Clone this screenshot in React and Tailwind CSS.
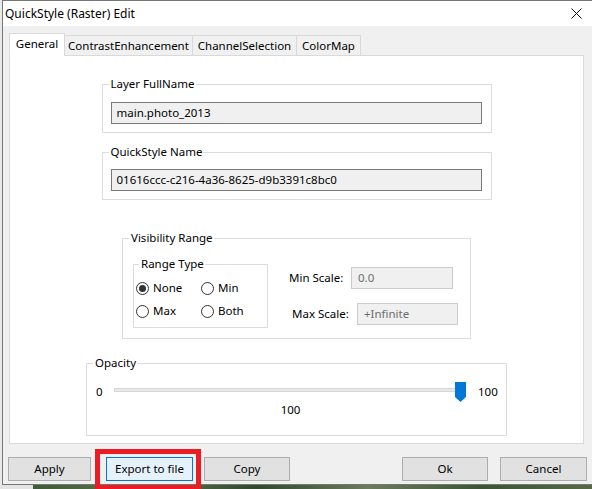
import React from "react";

function GroupBox({ label, className, labelLeft = "left-[6px]", children }) {
  return (
    <div className={"relative border border-[#dcdcdc] " + className}>
      <div className={"absolute top-[-9px] " + labelLeft + " bg-white pl-[2px] pr-[1px] leading-[16px] text-black"}>
        {label}
      </div>
      {children}
    </div>
  );
}

function Radio({ label, checked }) {
  return (
    <div className="flex items-center gap-[4px] h-[16px]">
      <div className="w-[13px] h-[13px] rounded-full border border-[#333] bg-white flex items-center justify-center">
        {checked && <div className="w-[7px] h-[7px] rounded-full bg-[#333]" />}
      </div>
      <span className="leading-[16px]">{label}</span>
    </div>
  );
}

function Btn({ children, className, focused }) {
  return (
    <div
      className={
        "h-[24px] flex items-center justify-center border leading-[16px] text-black " +
        (focused ? "bg-[#e5f1fb] border-[#0078d7] " : "bg-[#e1e1e1] border-[#adadad] ") +
        className
      }
    >
      {children}
    </div>
  );
}

export default function App() {
  const tabs = [
    { name: "General", w: "w-[56px]", sel: true },
    { name: "ContrastEnhancement", w: "w-[129px]" },
    { name: "ChannelSelection", w: "w-[105px]" },
    { name: "ColorMap", w: "w-[65px]" },
  ];
  return (
    <div className="relative w-[592px] h-[489px] overflow-hidden bg-[#e9e9e9] font-['Noto_Sans',sans-serif] text-[11.5px] text-black">
      <div className="h-[485px] ml-[2px] border-l border-t border-b border-[#767676] bg-[#f0f0f0] flex flex-col">
        {/* title bar */}
        <div className="h-[25px] bg-white flex items-center justify-between pl-[2px] pr-[10px] shrink-0">
          <span className="leading-[16px] text-[12px]">QuickStyle (Raster) Edit</span>
          <svg width="11" height="11" viewBox="0 0 11 11">
            <path d="M0.5 0.5 L10.5 10.5 M10.5 0.5 L0.5 10.5" stroke="#111" strokeWidth="1" />
          </svg>
        </div>
        {/* tabs */}
        <div className="mt-[7px] h-[22px] flex items-end pl-[6px] shrink-0">
          {tabs.map((t, i) => (
            <div
              key={t.name}
              className={
                t.w +
                " flex justify-center border-t border-l border-r border-[#d9d9d9] leading-[16px] " +
                (i > 0 ? "-ml-px " : "") +
                (t.sel
                  ? "h-[23px] -mb-px bg-white relative z-10 items-start pt-[2px]"
                  : "h-[20px] bg-[#f0f0f0] items-center pt-[1px]")
              }
            >
              {t.name}
            </div>
          ))}
        </div>
        {/* panel */}
        <div className="ml-[6px] w-[575px] h-[389px] bg-white border border-[#d9d9d9] flex flex-col items-center shrink-0">
          <GroupBox label="Layer FullName" className="mt-[28px] w-[390px] h-[49px]">
            <div className="mt-[17px] ml-[8px] w-[371px] h-[22px] border border-[#7a7a7a] bg-[#f0f0f0] flex items-center pl-[5px] leading-[16px]">
              main.photo_2013
            </div>
          </GroupBox>
          <GroupBox label="QuickStyle Name" className="mt-[19px] w-[390px] h-[48px]">
            <div className="mt-[16px] ml-[8px] w-[371px] h-[22px] border border-[#7a7a7a] bg-[#f0f0f0] flex items-center pl-[5px] leading-[16px]">
              01616ccc-c216-4a36-8625-d9b3391c8bc0
            </div>
          </GroupBox>
          <GroupBox label="Visibility Range" className="mt-[38px] w-[349px] h-[101px]">
            <div className="flex items-start">
              <GroupBox label="Range Type" labelLeft="left-[5px]" className="mt-[25px] ml-[10px] w-[135px] h-[64px] shrink-0">
                <div className="pt-[15px] pl-[2px] grid grid-cols-[65px_auto] gap-y-[7px]">
                  <Radio label="None" checked />
                  <Radio label="Min" />
                  <Radio label="Max" />
                  <Radio label="Both" />
                </div>
              </GroupBox>
              <div className="mt-[28px] ml-[21px] flex flex-col gap-[14px]">
                <div className="flex items-center h-[22px]">
                  <span className="w-[62px] leading-[16px]">Min Scale:</span>
                  <div className="w-[102px] h-[22px] border border-[#cccccc] bg-[#f0f0f0] flex items-center pl-[6px] text-[#6d6d6d] leading-[16px]">
                    0.0
                  </div>
                </div>
                <div className="flex items-center h-[22px] ml-[3px]">
                  <span className="w-[65px] leading-[16px]">Max Scale:</span>
                  <div className="w-[101px] h-[22px] border border-[#cccccc] bg-[#f0f0f0] flex items-center pl-[6px] text-[#6d6d6d] leading-[16px]">
                    +Infinite
                  </div>
                </div>
              </div>
            </div>
          </GroupBox>
          <GroupBox label="Opacity" className="mt-[24px] w-[421px] h-[73px]">
            <div className="mt-[18px] flex items-center h-[20px]">
              <span className="ml-[9px] w-[13px] leading-[16px]">0</span>
              <div className="relative w-[357px] h-[20px]">
                <div className="absolute left-[5px] right-[9px] top-[6px] h-[4px] bg-[#e7eaea] border border-[#d6d6d6]" />
                <svg className="absolute right-0 top-0" width="11" height="20" viewBox="0 0 11 20">
                  <path d="M0 0 H11 V15 L5.5 20 L0 15 Z" fill="#0078d7" />
                </svg>
              </div>
              <span className="ml-[12px] leading-[16px]">100</span>
            </div>
            <div className="pr-[12px] text-center leading-[16px]">100</div>
          </GroupBox>
        </div>
        {/* buttons */}
        <div className="mt-[13px] flex items-center">
          <Btn className="ml-[5px] w-[83px]">Apply</Btn>
          <Btn className="ml-[15px] w-[87px]" focused>Export to file</Btn>
          <Btn className="ml-[11px] w-[86px]">Copy</Btn>
          <Btn className="ml-[112px] w-[86px]">Ok</Btn>
          <Btn className="ml-[12px] w-[87px]">Cancel</Btn>
        </div>
      </div>
      {/* photo strip */}
      <div className="flex h-[4px]">
        <div className="w-[33px] bg-[#e4e4e4]" />
        <div className="flex-1 bg-[linear-gradient(90deg,#3d5c35,#5d7a4a_20%,#2f4a2c_40%,#6b7d5a_60%,#3a5533_80%,#556b45)]" />
      </div>
      {/* red highlight */}
      <div className="absolute left-[95px] top-[449px] w-[106px] h-[41px] border-[5px] border-[#ed1c24]" />
    </div>
  );
}
